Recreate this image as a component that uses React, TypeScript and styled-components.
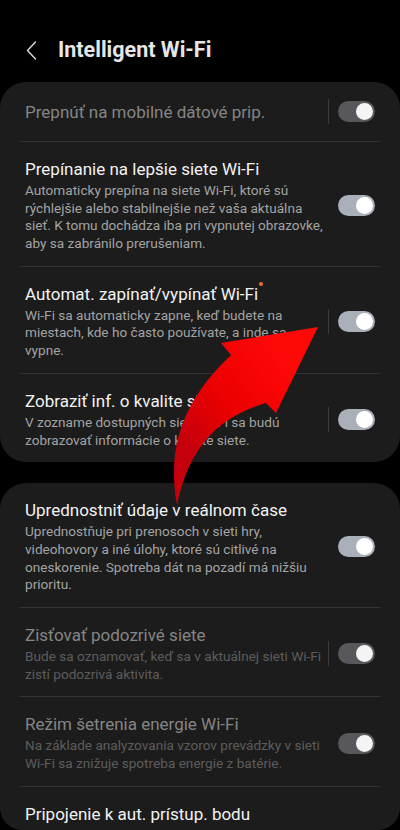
import React from "react";
import styled, { createGlobalStyle } from "styled-components";

const Global = createGlobalStyle`
  html, body { margin: 0; padding: 0; background: #000; }
  body { font-family: Roboto, "Noto Sans", sans-serif; -webkit-font-smoothing: antialiased; }
`;

const Screen = styled.div`
  position: relative;
  width: 400px;
  height: 830px;
  overflow: hidden;
  background: #000;
  border-radius: 0 0 22px 22px;
`;

const Header = styled.header`
  display: flex;
  align-items: center;
  height: 24px;
  padding: 38px 0 0 26px;
  margin-bottom: 20px;
  gap: 21px;
`;

const BackButton = styled.button`
  display: flex;
  align-items: center;
  justify-content: center;
  width: 11px;
  height: 20px;
  padding: 0;
  border: 0;
  background: transparent;
`;

const Title = styled.h1`
  margin: 0;
  font-size: 21.5px;
  line-height: 24px;
  font-weight: 700;
  color: #e6e6e6;
`;

const Card = styled.section`
  background: #1c1c1c;
  border-radius: 26px;
  margin-bottom: 21px;
  overflow: hidden;
`;

const Row = styled.div<{ $single?: boolean }>`
  display: flex;
  align-items: center;
  padding: ${(p) => (p.$single ? "17px 25px 17px 25px" : "16px 25px 13px 25px")};
`;

const Texts = styled.div`
  flex: 1;
  min-width: 0;
  padding-right: 4px;
`;

const RowTitle = styled.div<{ $dim?: boolean }>`
  display: block;
  font-size: 17px;
  line-height: 22px;
  height: 22px;
  color: ${(p) => (p.$dim ? "#858585" : "#f2f2f2")};
  white-space: nowrap;
`;

const TitleText = styled.span`
  position: relative;
`;

const Dot = styled.span`
  position: absolute;
  top: -2px;
  right: -5px;
  width: 4.5px;
  height: 4.5px;
  border-radius: 50%;
  background: #f0682c;
`;

const Desc = styled.div<{ $dim?: boolean }>`
  margin-top: 2px;
  font-size: 13.6px;
  line-height: 17.7px;
  color: ${(p) => (p.$dim ? "#5c5c5c" : "#a3a3a3")};
`;

const Line = styled.span`
  display: block;
  height: 17.7px;
  white-space: nowrap;
`;

const Side = styled.div`
  flex: 0 0 47px;
  display: flex;
  align-items: center;
  justify-content: space-between;
`;

const VDivider = styled.span<{ $show?: boolean }>`
  width: 1px;
  height: 25px;
  background: ${(p) => (p.$show ? "#3a3a3a" : "transparent")};
`;

const Toggle = styled.span<{ $dim?: boolean }>`
  position: relative;
  width: 37px;
  height: 21px;
  border-radius: 11px;
  background: ${(p) => (p.$dim ? "#58585c" : "#a9b0ba")};
`;

const Thumb = styled.span<{ $dim?: boolean }>`
  position: absolute;
  top: 2px;
  right: 2px;
  width: 17px;
  height: 17px;
  border-radius: 50%;
  background: ${(p) => (p.$dim ? "#f4f4f4" : "#ffffff")};
`;

const HDivider = styled.div`
  height: 1px;
  margin: 0 20px;
  background: #333333;
`;

const Overlay = styled.svg`
  position: absolute;
  left: 0;
  top: 0;
  pointer-events: none;
`;

type Item = {
  title: string;
  desc?: string[];
  dim?: boolean;
  toggleDim?: boolean;
  divider?: boolean;
  dot?: boolean;
  noToggle?: boolean;
};

const card1: Item[] = [
  { title: "Prepnúť na mobilné dátové prip.", dim: true, toggleDim: true, divider: true },
  {
    title: "Prepínanie na lepšie siete Wi-Fi",
    desc: [
      "Automaticky prepína na siete Wi-Fi, ktoré sú",
      "rýchlejšie alebo stabilnejšie než vaša aktuálna",
      "sieť. K tomu dochádza iba pri vypnutej obrazovke,",
      "aby sa zabránilo prerušeniam.",
    ],
  },
  {
    title: "Automat. zapínať/vypínať Wi-Fi",
    dot: true,
    divider: true,
    desc: [
      "Wi-Fi sa automaticky zapne, keď budete na",
      "miestach, kde ho často používate, a inde sa",
      "vypne.",
    ],
  },
  {
    title: "Zobraziť inf. o kvalite siete",
    divider: true,
    desc: ["V zozname dostupných sietí Wi-Fi sa budú", "zobrazovať informácie o kvalite siete."],
  },
];

const card2: Item[] = [
  {
    title: "Uprednostniť údaje v reálnom čase",
    desc: [
      "Uprednostňuje pri prenosoch v sieti hry,",
      "videohovory a iné úlohy, ktoré sú citlivé na",
      "oneskorenie. Spotreba dát na pozadí má nižšiu",
      "prioritu.",
    ],
  },
  {
    title: "Zisťovať podozrivé siete",
    dim: true,
    toggleDim: true,
    divider: true,
    desc: ["Bude sa oznamovať, keď sa v aktuálnej sieti Wi-Fi", "zistí podozrivá aktivita."],
  },
  {
    title: "Režim šetrenia energie Wi-Fi",
    dim: true,
    toggleDim: true,
    desc: ["Na základe analyzovania vzorov prevádzky v sieti", "Wi-Fi sa znižuje spotreba energie z batérie."],
  },
  { title: "Pripojenie k aut. prístup. bodu", noToggle: true, desc: ["Nikdy"] },
];

function SettingRow({ item }: { item: Item }) {
  return (
    <Row $single={!item.desc}>
      <Texts>
        <RowTitle $dim={item.dim}>
          <TitleText>
            {item.title}
            {item.dot && <Dot />}
          </TitleText>
        </RowTitle>
        {item.desc && (
          <Desc $dim={item.dim}>
            {item.desc.map((l) => (
              <Line key={l}>{l}</Line>
            ))}
          </Desc>
        )}
      </Texts>
      {!item.noToggle && (
        <Side>
          <VDivider $show={item.divider} />
          <Toggle $dim={item.toggleDim}>
            <Thumb $dim={item.toggleDim} />
          </Toggle>
        </Side>
      )}
    </Row>
  );
}

function CardList({ items }: { items: Item[] }) {
  return (
    <Card>
      {items.map((it, i) => (
        <React.Fragment key={it.title}>
          {i > 0 && <HDivider />}
          <SettingRow item={it} />
        </React.Fragment>
      ))}
    </Card>
  );
}

export default function App() {
  return (
    <>
      <Global />
      <Screen>
        <Header>
          <BackButton aria-label="Späť">
            <svg width="11" height="19" viewBox="0 0 11 19">
              <path d="M9.5 1 L1.5 9.5 L9.5 18" fill="none" stroke="#dcdcdc" strokeWidth="1.4" strokeLinecap="round" strokeLinejoin="round" />
            </svg>
          </BackButton>
          <Title>Intelligent Wi-Fi</Title>
        </Header>
        <CardList items={card1} />
        <CardList items={card2} />
        <Overlay width="400" height="830" viewBox="0 0 400 830">
          <defs>
            <linearGradient id="arr" x1="0" y1="0.6" x2="0.6" y2="0">
              <stop offset="0" stopColor="#c4000c" />
              <stop offset="0.45" stopColor="#ec0000" />
              <stop offset="1" stopColor="#ff0808" />
            </linearGradient>
          </defs>
          <path
            d="M318 327 L221 343 L231 355 C200 385, 163 430, 177 505 C187 460, 206 421, 266 403 L276 413 Z"
            fill="url(#arr)"
          />
        </Overlay>
      </Screen>
    </>
  );
}
